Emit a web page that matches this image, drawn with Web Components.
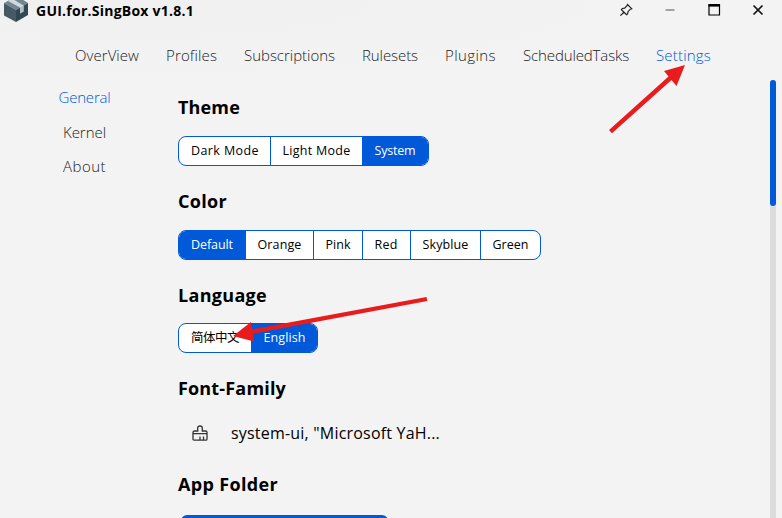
<!DOCTYPE html>
<html lang="en">
<head>
<meta charset="utf-8">
<title>GUI.for.SingBox</title>
<style>
html,body{margin:0;height:100%;overflow:hidden;background:#f3f3f3}
body{font-family:"Open Sans","Noto Sans","Noto Sans CJK SC",sans-serif;color:#000}
</style>
</head>
<body>
<app-window></app-window>
<script>
const define = (name, html, setup) => customElements.define(name, class extends HTMLElement {
  connectedCallback() {
    if (this.shadowRoot) return;
    const t = document.createElement('template');
    t.innerHTML = html;
    this.attachShadow({mode: 'open'}).append(t.content.cloneNode(true));
    if (setup) setup(this);
  }
});

// A text run tracked to a given advance width.
define('ui-text', `<style>:host{display:inline-block;white-space:pre}span{display:inline-block;white-space:pre}</style><span><slot></slot></span>`, el => {
  const span = el.shadowRoot.querySelector('span');
  const w = Number(el.getAttribute('w'));
  el.style.width = w + 'px';
  const n = el.textContent.length;
  span.style.letterSpacing = ((w - span.getBoundingClientRect().width) / n) + 'px';
});

define('title-bar', `<style>
:host{display:flex;height:22px;align-items:flex-start;padding:0 16px 0 3px;box-sizing:border-box}
.logo{width:26px;height:22px;margin-right:7px;flex:none}
ui-text{font-weight:700;font-size:14px;line-height:22px;flex:none}
.ctl{margin-left:auto;display:flex;gap:28px;padding-top:2px}
.ctl svg{width:16px;height:16px;display:block}
</style>
<svg class="logo" viewBox="0 0 26 22">
<path d="M1 3 14-4 25 3 13 10z" fill="#71868f"/>
<path d="M1 3 13 10V22L1 15.500z" fill="#455a64"/>
<path d="M13 10 25 3V15L13 22z" fill="#314751"/>
<path d="M5 1 9-1.500 20.500 5.500V11.500L17 13.500V7.500z" fill="#cfd8dc"/>
<path d="M17 7.500 20.500 5.500V11.500L17 13.500z" fill="#aebec6"/>
</svg>
<ui-text w="158">GUI.for.SingBox v1.8.1</ui-text>
<div class="ctl">
<svg viewBox="0 0 16 16" fill="none" stroke="#222" stroke-width="1.200"><path d="M9.500 2.500 13.700 6.700 12.400 7.200 10 9.700 9.600 12 8.600 12.700 3.400 7.600 4.300 6.500 6.600 6.200 9 3.700zM5.900 10.200 2.400 13.600"/></svg>
<svg viewBox="0 0 16 16"><path d="M3.500 8h9" stroke="#888" stroke-width="1.500"/></svg>
<svg viewBox="0 0 16 16"><path d="M3 2.500h10.500v10.500H3z" fill="none" stroke="#000" stroke-width="1.200"/><path d="M2.500 3.500h11.500" stroke="#000" stroke-width="2.200"/></svg>
<svg viewBox="0 0 16 16"><path d="M3.500 3.500 12.500 12.500M12.500 3.500 3.500 12.500" stroke="#111" stroke-width="1.700"/></svg>
</div>`);

define('nav-bar', `<style>
:host{display:flex;gap:27px;height:58px;padding:21px 0 0 75px;box-sizing:border-box;font-size:15px;font-weight:340;line-height:24px;color:#222}
::slotted([active]){color:#0059d8}
</style><slot></slot>`);

define('side-menu', `<style>
:host{display:flex;flex-direction:column;align-items:center;gap:10.500px;width:169px;padding-top:5px;box-sizing:border-box;font-size:15px;font-weight:340;line-height:24px;color:#222;flex:none}
::slotted([active]){color:#0059d8}
</style><slot></slot>`);

define('setting-section', `<style>
:host{display:block;box-sizing:border-box;height:94px}
.h{font-size:18px;font-weight:700;line-height:28px;height:43px;display:block}
</style><div class="h"><slot name="title"></slot></div><slot></slot>`);

// Items are "label:cell width:text width"; a leading * marks the chosen one.
define('segmented-control', `<style>
:host{display:flex;width:max-content;height:30px;border:1px solid #0059d8;border-radius:8px;box-sizing:border-box;overflow:hidden;background:#fff;font-size:12.500px}
div{display:flex;box-sizing:border-box;padding-left:12px;line-height:28px}
div+div{border-left:1px solid #0059d8;padding-left:11.500px}
.on{background:#0059d8;color:#fff}
</style>`, el => {
  for (const item of el.getAttribute('items').split('|')) {
    const [label, cell, w] = item.split(':');
    const d = document.createElement('div');
    d.style.width = cell + 'px';
    if (label[0] === '*') d.className = 'on';
    const t = document.createElement('ui-text');
    t.setAttribute('w', w);
    t.textContent = label.replace('*', '');
    d.append(t);
    el.shadowRoot.append(d);
  }
});

define('font-row', `<style>
:host{display:flex;align-items:center;height:34px;padding-left:14px;font-size:16px;line-height:34px;margin-top:-1px}
svg{width:16px;height:16px;margin-right:23px;flex:none}
</style>
<svg viewBox="0 0 16 16" fill="none" stroke="#333" stroke-width="1.300"><path d="M1 7.500Q1 6 2.500 6H5.700V3Q5.700 1 8 1T10.300 3V6H13.500Q15 6 15 7.500V14Q15 15.200 13.800 15.200H2.200Q1 15.200 1 14zM1 8.700H15M8 15V11.500M11.500 15V11.500"/></svg>
<slot></slot>`);

define('scroll-bar', `<style>
:host{display:block;width:6px;height:438px;background:#dcdcdc;border-radius:3px 3px 0 0;flex:none;margin:0 6px 0 auto}
div{height:126px;border-radius:3px;background:#0059d8}
</style><div></div>`);

define('arrow-marks', `<style>
:host{position:absolute;inset:0;pointer-events:none}
svg{display:block}
</style>
<svg width="782" height="518" fill="#e81c1c"><path d="M609 130 668.500 76.500 664 71 685 65 676.500 86 671.500 80 612 133.300z"/><path d="M426.500 297 252.500 329.400 251 322 233 336 254 341.500 253.200 333.700 427.300 301z"/></svg>`);

define('app-window', `<style>
:host{display:block;position:relative;width:782px;height:518px;overflow:hidden;background:radial-gradient(ellipse 520px 80px at 120px 0,#f0f0f0,#f3f3f3)}
.body{display:flex;height:438px}
main{flex:none;width:440px;padding:13px 0 0 9px;box-sizing:border-box}
.action{width:207px;height:30px;margin:2px 0 0 3px;border-radius:6px;background:#0059d8}
setting-section.font{height:96px}
setting-section.lang{height:93px}
.lang segmented-control{margin-top:-1px}
</style>
<title-bar></title-bar>
<nav-bar>
<ui-text w="64">OverView</ui-text><ui-text w="51">Profiles</ui-text><ui-text w="91">Subscriptions</ui-text><ui-text w="56">Rulesets</ui-text><ui-text w="51">Plugins</ui-text><ui-text w="106">ScheduledTasks</ui-text><ui-text w="55" active>Settings</ui-text>
</nav-bar>
<div class="body">
<side-menu><ui-text w="52" active>General</ui-text><ui-text w="43">Kernel</ui-text><ui-text w="43">About</ui-text></side-menu>
<main>
<setting-section><ui-text slot="title" w="62">Theme</ui-text><segmented-control items="Dark Mode:91:68|Light Mode:92:68|*System:66:41"></segmented-control></setting-section>
<setting-section><ui-text slot="title" w="49">Color</ui-text><segmented-control items="*Default:66:42|Orange:68:44|Pink:49:25|Red:48:23|Skyblue:70:46|Green:60:36"></segmented-control></setting-section>
<setting-section class="lang"><ui-text slot="title" w="89">Language</ui-text><segmented-control items="简体中文:72:48|*English:66:42"></segmented-control></setting-section>
<setting-section class="font"><ui-text slot="title" w="108">Font-Family</ui-text><font-row><ui-text w="209">system-ui, "Microsoft YaH...</ui-text></font-row></setting-section>
<setting-section><ui-text slot="title" w="100">App Folder</ui-text><div class="action"></div></setting-section>
</main>
<scroll-bar></scroll-bar>
</div>
<arrow-marks></arrow-marks>`);
</script>
</body>
</html>
